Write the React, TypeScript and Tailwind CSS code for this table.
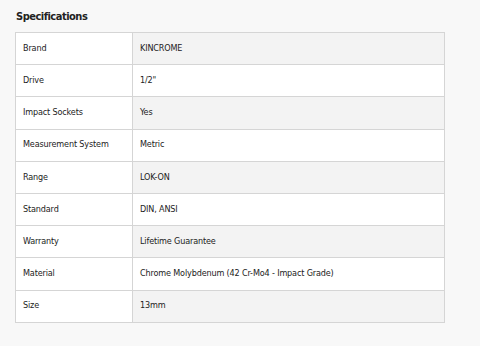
const specs: [string, string][] = [
  ['Brand', 'KINCROME'],
  ['Drive', '1/2"'],
  ['Impact Sockets', 'Yes'],
  ['Measurement System', 'Metric'],
  ['Range', 'LOK-ON'],
  ['Standard', 'DIN, ANSI'],
  ['Warranty', 'Lifetime Guarantee'],
  ['Material', 'Chrome Molybdenum (42 Cr-Mo4 - Impact Grade)'],
  ['Size', '13mm'],
];

export default function App() {
  return (
    <div
      className="w-[480px] h-[346px] bg-[#f8f8f8] text-[#222] pl-[15px] pt-[8px]"
      style={{ fontFamily: '"DejaVu Sans Condensed", "DejaVu Sans", sans-serif' }}
    >
      <h2 className="text-[11px] font-bold leading-[18px] tracking-[-0.5px] pl-px mb-[6px]">
        Specifications
      </h2>
      <table className="w-[430px] border-collapse text-[9px] tracking-[-0.15px]">
        <tbody>
          {specs.map(([label, value], i) => (
            <tr key={label} className="h-[32.2px]">
              <td className="w-[117px] border border-[#d5d5d5] bg-white pl-[7px]">{label}</td>
              <td
                className={`border border-[#d5d5d5] pl-[7px] ${
                  i % 2 === 0 ? 'bg-[#f3f3f3]' : 'bg-white'
                }`}
              >
                {value}
              </td>
            </tr>
          ))}
        </tbody>
      </table>
    </div>
  );
}
